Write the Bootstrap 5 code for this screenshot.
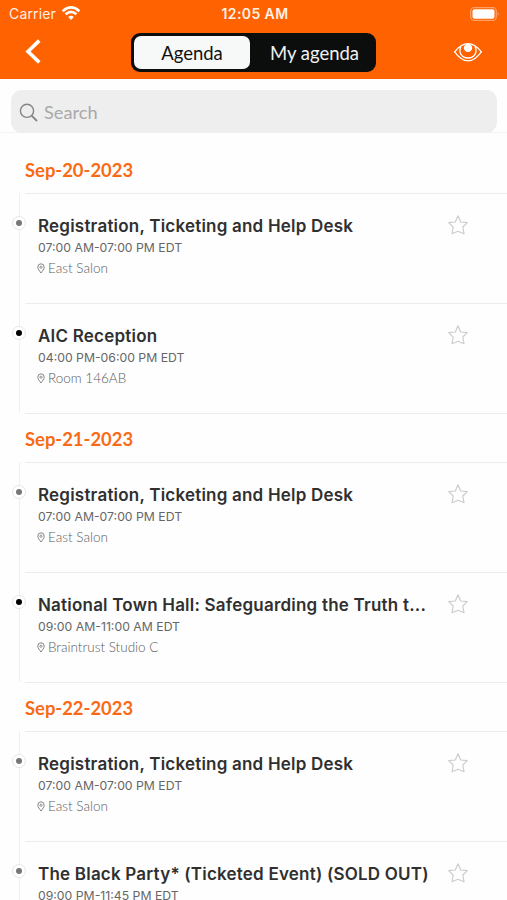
<!DOCTYPE html>
<html lang="en">
<head>
<meta charset="utf-8">
<meta name="viewport" content="width=device-width, initial-scale=1">
<title>Agenda</title>
<link href="https://cdn.jsdelivr.net/npm/bootstrap@5.3.0/dist/css/bootstrap.min.css" rel="stylesheet">
<style>
  body { font-family: Lato, sans-serif; background: #fefefe; height: 900px; overflow: hidden; }
  .app-top { background: #ff6200; height: 79px; }
  .status { height: 27px; padding: 0 6px 0 9px; font: 400 14px/27px Inter, sans-serif; color: #fff0e6; }
  .status > * { flex: 1 1 0; }
  .carrier { letter-spacing: .15px; }
  .wifi { margin-left: 5px; }
  .clock { font-weight: 600; letter-spacing: .4px; }
  .toolbar { height: 52px; padding: 0 24px 0 25px; }
  .back { margin-top: 8px; margin-right: 11px; }
  .segments { width: 245px; height: 39px; background: #0c0e0d; border-radius: 9px; padding: 3px; margin-top: 6px; }
  .seg { font-size: 18.5px; line-height: 34px; color: #f2f2f2; border-radius: 7px; text-align: center; padding-left: 6px; }
  .seg.on { background: #f7f9f8; color: #111; width: 116px; padding-left: 0; }
  .search-wrap { height: 54px; padding: 11px 10px 0 11px; border-bottom: 1px solid #f3f3f3; }
  .search-box { height: 43px; background: #eeeeee; border-radius: 11px; padding: 2px 0 0 8px; font-size: 18.2px; color: #a9a9a9; }
  .search-box svg { margin-right: 6px; }
  .day-head { height: 49px; padding-left: 25px; font-size: 18.4px; line-height: 53px; font-weight: 700; color: #f96a16; }
  .agenda { padding-top: 11px; }
  .timeline { position: relative; padding-left: 25px; }
  .timeline::before { content: ""; position: absolute; left: 19px; top: 0; bottom: 0; width: 1px; background: #f0f0f0; }
  .session { position: relative; height: 110px; padding: 20px 38px 0 13px; border-top: 1px solid #ececec; }
  .session:last-child::after { content: ""; position: absolute; left: 0; right: 0; bottom: -1px; height: 1px; background: #ececec; }
  .dot { position: absolute; left: -13px; top: 22px; width: 14px; height: 14px; border-radius: 50%; border: 1px solid #e6e6e6; background: #fff; }
  .dot::after { content: ""; position: absolute; left: 3px; top: 3px; width: 6px; height: 6px; border-radius: 50%; background: #777; }
  .dot.dark::after { background: #000; }
  .title { font: 600 17px/23px Inter, sans-serif; letter-spacing: .21px; color: #303030; white-space: nowrap; padding-top: 1px; }
  .time { font: 400 12.25px/20px Inter, sans-serif; color: #666; }
  .place { font-size: 13.5px; line-height: 20px; font-weight: 300; color: #5c5c5c; gap: 3px; margin-left: -1px; }
</style>
<script src="https://cdn.jsdelivr.net/npm/bootstrap@5.3.0/dist/js/bootstrap.bundle.min.js"></script>
</head>
<body>
<svg class="d-none">
  <symbol id="star" viewBox="0 0 22 22"><path d="M11 1.800 13.700 8 20.300 8.600 15.800 13 17 19.700 11 17.200 5 19.700 6.200 13 1.700 8.600 8.300 8Z" fill="none" stroke="#cdcdcd" stroke-width="1.200" stroke-linejoin="round"/></symbol>
  <symbol id="pin" viewBox="0 0 8 11"><path d="M4 10C2.700 8 .8 6.200.8 4.100A3.200 3.300 0 0 1 7.200 4.100C7.200 6.200 5.300 8 4 10Z" fill="none" stroke="#777" stroke-width=".9"/><circle cx="4" cy="4.200" r="1.100" fill="none" stroke="#777" stroke-width=".8"/></symbol>
</svg>
<header class="app-top">
  <div class="status d-flex">
    <div class="d-flex align-items-center"><span class="carrier">Carrier</span>
      <svg class="wifi" width="20" height="15" viewBox="0 0 20 15" fill="none" stroke="#fff" stroke-width="2.500"><path d="M1.600 5.200Q10-2.400 18.400 5.200M4.600 8.300Q10 3.400 15.400 8.300"/><path d="M7.200 11Q10 8.500 12.800 11L10 13.900Z" fill="#fff" stroke="none"/></svg>
    </div>
    <div class="clock text-center">12:05 AM</div>
    <div class="d-flex justify-content-end align-items-center">
      <svg width="31" height="14" viewBox="0 0 31 14"><rect x=".7" y=".7" width="25.600" height="12.600" rx="3.500" fill="none" stroke="#ffa066" stroke-width="1.300"/><rect x="2.500" y="2.300" width="22" height="9.400" rx="2" fill="#fff"/><path d="M27.700 5Q30 7 27.700 9Z" fill="#ffa066"/></svg>
    </div>
  </div>
  <div class="toolbar d-flex justify-content-between align-items-start">
    <svg class="back" width="18" height="32" viewBox="0 0 18 32"><path d="M14.300 5.600 3 16.500 14.300 27.400" fill="none" stroke="#fff" stroke-width="3.600"/></svg>
    <div class="segments d-flex"><div class="seg on">Agenda</div><div class="seg flex-grow-1">My agenda</div></div>
    <svg class="mt-3" width="30" height="20" viewBox="0 0 30 20" fill="none" stroke="#fff" stroke-width="1.300"><path d="M1.600 8.800Q15-7.500 28.400 8.800Q15 27 1.600 8.800Z"/><path d="M8 3.300C5 10 9 15 15 15S25 10 22 3.300"/><circle cx="15" cy="4.900" r="4.200" fill="#fff" stroke="none"/></svg>
  </div>
</header>
<div class="search-wrap">
  <div class="search-box d-flex align-items-center">
    <svg width="19" height="20" viewBox="0 0 19 20" fill="none" stroke="#858585" stroke-width="1.400"><circle cx="8" cy="7.800" r="6.600"/><path d="M12.600 12.600 18 18" stroke-width="1.800"/></svg>
    <span>Search</span>
  </div>
</div>
<main class="agenda">
  <section>
    <h2 class="day-head m-0">Sep-20-2023</h2>
    <div class="timeline">
      <article class="session d-flex justify-content-between"><i class="dot"></i>
        <div><div class="title">Registration, Ticketing and Help Desk</div><div class="time">07:00 AM-07:00 PM EDT</div><div class="place d-flex align-items-center"><svg width="8" height="11"><use href="#pin"/></svg>East Salon</div></div>
        <svg width="22" height="22"><use href="#star"/></svg></article>
      <article class="session d-flex justify-content-between"><i class="dot dark"></i>
        <div><div class="title">AIC Reception</div><div class="time">04:00 PM-06:00 PM EDT</div><div class="place d-flex align-items-center"><svg width="8" height="11"><use href="#pin"/></svg>Room 146AB</div></div>
        <svg width="22" height="22"><use href="#star"/></svg></article>
    </div>
  </section>
  <section>
    <h2 class="day-head m-0">Sep-21-2023</h2>
    <div class="timeline">
      <article class="session d-flex justify-content-between"><i class="dot"></i>
        <div><div class="title">Registration, Ticketing and Help Desk</div><div class="time">07:00 AM-07:00 PM EDT</div><div class="place d-flex align-items-center"><svg width="8" height="11"><use href="#pin"/></svg>East Salon</div></div>
        <svg width="22" height="22"><use href="#star"/></svg></article>
      <article class="session d-flex justify-content-between"><i class="dot dark"></i>
        <div><div class="title">National Town Hall: Safeguarding the Truth t...</div><div class="time">09:00 AM-11:00 AM EDT</div><div class="place d-flex align-items-center"><svg width="8" height="11"><use href="#pin"/></svg>Braintrust Studio C</div></div>
        <svg width="22" height="22"><use href="#star"/></svg></article>
    </div>
  </section>
  <section>
    <h2 class="day-head m-0">Sep-22-2023</h2>
    <div class="timeline">
      <article class="session d-flex justify-content-between"><i class="dot"></i>
        <div><div class="title">Registration, Ticketing and Help Desk</div><div class="time">07:00 AM-07:00 PM EDT</div><div class="place d-flex align-items-center"><svg width="8" height="11"><use href="#pin"/></svg>East Salon</div></div>
        <svg width="22" height="22"><use href="#star"/></svg></article>
      <article class="session d-flex justify-content-between"><i class="dot"></i>
        <div><div class="title">The Black Party* (Ticketed Event) (SOLD OUT)</div><div class="time">09:00 PM-11:45 PM EDT</div></div>
        <svg width="22" height="22"><use href="#star"/></svg></article>
    </div>
  </section>
</main>
</body>
</html>
